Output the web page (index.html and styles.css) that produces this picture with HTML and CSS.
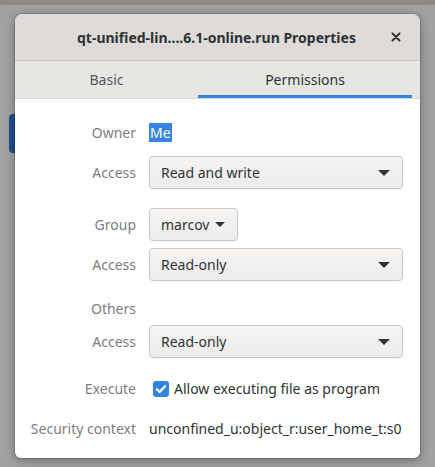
FILE: index.html
```html
<!DOCTYPE html>
<html>
<head>
<meta charset="utf-8">
<link rel="stylesheet" href="styles.css">
</head>
<body>
<div class="desktop">
  <div class="topstrip"></div>
  <div class="behind"></div>
  <div class="window">
    <div class="titlebar">
      <span class="title">qt-unified-lin....6.1-online.run Properties</span>
      <span class="close">
        <svg width="10" height="10" viewBox="0 0 10 10"><path d="M1.5 1.5 L8.5 8.5 M8.5 1.5 L1.5 8.5" stroke="#2e3436" stroke-width="2" stroke-linecap="round"/></svg>
      </span>
    </div>
    <div class="tabs">
      <div class="tab">Basic</div>
      <div class="tab active">Permissions</div>
    </div>
    <div class="content">
      <div class="row">
        <div class="label">Owner</div>
        <div class="value"><span class="sel">Me</span></div>
      </div>
      <div class="row gap7">
        <div class="label">Access</div>
        <div class="value"><div class="combo wide"><span>Read and write</span><span class="arrow"></span></div></div>
      </div>
      <div class="row gap19">
        <div class="label">Group</div>
        <div class="value"><div class="combo small"><span>marcov</span><span class="arrow"></span></div></div>
      </div>
      <div class="row gap7">
        <div class="label">Access</div>
        <div class="value"><div class="combo wide"><span>Read-only</span><span class="arrow"></span></div></div>
      </div>
      <div class="row gap11">
        <div class="label">Others</div>
        <div class="value"></div>
      </div>
      <div class="row">
        <div class="label">Access</div>
        <div class="value"><div class="combo wide"><span>Read-only</span><span class="arrow"></span></div></div>
      </div>
      <div class="row gap14">
        <div class="label">Execute</div>
        <div class="value check-row">
          <span class="check"><svg width="16" height="16" viewBox="0 0 16 16"><rect x="0" y="0" width="16" height="16" rx="3" fill="#3584e4"/><path d="M3.8 8.2 L6.6 11 L12.2 5" stroke="#fff" stroke-width="2.2" fill="none" stroke-linecap="round" stroke-linejoin="round"/></svg></span>
          <span>Allow executing file as program</span>
        </div>
      </div>
      <div class="row gap7">
        <div class="label">Security context</div>
        <div class="value">unconfined_u:object_r:user_home_t:s0</div>
      </div>
    </div>
  </div>
</div>
</body>
</html>
```

FILE: styles.css
```css
html, body {
  margin: 0;
  padding: 0;
}
body {
  width: 435px;
  height: 467px;
  overflow: hidden;
  font-family: "Noto Sans", "Open Sans", sans-serif;
  font-size: 14px;
  color: #2e3436;
}
.desktop {
  position: relative;
  width: 435px;
  height: 467px;
  background: #a1a1a1;
  padding-top: 14px;
  box-sizing: border-box;
}
.topstrip {
  position: absolute;
  left: 0;
  top: 0;
  width: 435px;
  height: 5px;
  background: #8c8986;
}
.behind {
  position: absolute;
  left: 9px;
  top: 114px;
  width: 20px;
  height: 39px;
  background: #1f4f8f;
  border-radius: 4px;
}
.window {
  position: relative;
  margin-left: 15px;
  width: 405px;
  height: 444px;
  border-radius: 8px 8px 6px 6px;
  overflow: hidden;
  background: #ffffff;
  box-shadow: 0 2px 10px rgba(0,0,0,0.35), 0 0 0 1px rgba(0,0,0,0.12);
}
.titlebar {
  height: 46px;
  background: #dedbd8;
  border-bottom: 1px solid #c7c3bf;
  display: flex;
  align-items: center;
  position: relative;
}
.title {
  font-weight: bold;
  font-size: 14px;
  margin-left: 62px;
  color: #2e3436;
}
.close {
  position: absolute;
  right: 19px;
  top: 18px;
  width: 10px;
  height: 10px;
  display: flex;
}
.tabs {
  height: 37px;
  background: #e8e6e3;
  display: grid;
  grid-template-columns: 183px 214px;
  border-bottom: 1px solid #d6d2ce;
}
.tab {
  display: flex;
  align-items: center;
  justify-content: center;
  color: #55595c;
  font-size: 14px;
}
.tab.active {
  color: #2e3436;
  border-bottom: 3px solid #3584e4;
  padding-top: 3px;
}
.content {
  padding-top: 17px;
}
.row {
  display: grid;
  grid-template-columns: 121px 1fr;
  column-gap: 13px;
  height: 33px;
  align-items: center;
}
.gap7 { margin-top: 7px; }
.gap11 { margin-top: 11px; }
.gap14 { margin-top: 14px; }
.gap19 { margin-top: 19px; }
.label {
  text-align: right;
  color: #7a7e80;
}
.value {
  height: 33px;
  display: flex;
  align-items: center;
}
.sel {
  background: #3584e4;
  color: #fff;
  line-height: 19px;
  padding: 0 1px;
}
.combo {
  height: 33px;
  box-sizing: border-box;
  border: 1px solid #cdc7c2;
  border-radius: 4px;
  background: linear-gradient(#f6f5f4, #edebe9);
  display: flex;
  align-items: center;
  justify-content: space-between;
  padding: 0 12px 0 11px;
  box-shadow: 0 1px 1px rgba(0,0,0,0.05);
}
.combo.wide {
  width: 254px;
}
.combo.small {
  width: 89px;
}
.arrow {
  width: 0;
  height: 0;
  border-left: 6px solid transparent;
  border-right: 6px solid transparent;
  border-top: 6px solid #2e3436;
}
.combo.small .arrow {
  border-left-width: 5px;
  border-right-width: 5px;
  border-top-width: 5px;
  margin-left: 4px;
}
.check-row {
  gap: 5px;
  padding-left: 4px;
}
.check {
  display: flex;
}
```
